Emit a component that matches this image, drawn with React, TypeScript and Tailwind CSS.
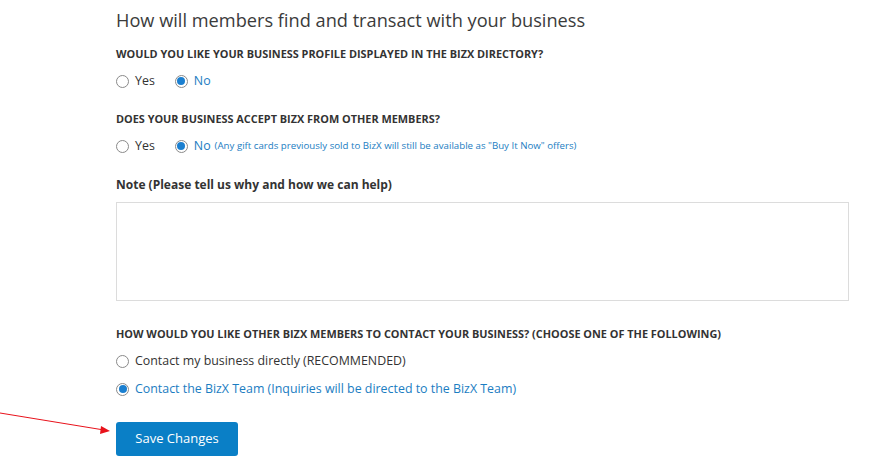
import React, { useState } from 'react';

const font = { fontFamily: '"Open Sans", "Liberation Sans", Arial, sans-serif' };

function Radio({ checked, label, onClick, extra }: { checked: boolean; label: string; onClick: () => void; extra?: string }) {
  return (
    <label className="flex items-center h-[16px] cursor-pointer" onClick={onClick}>
      <span className="w-[13px] h-[13px] rounded-full border border-[#8a8a8a] flex items-center justify-center bg-white">
        {checked && <span className="w-[8px] h-[8px] rounded-full bg-[#1a7fd0]" />}
      </span>
      <span className={`ml-[6px] text-[12.4px] leading-[16px] ${checked ? 'text-[#1b7dc2]' : 'text-[#333]'}`}>{label}</span>
      {extra && <span className="ml-[4px] text-[9.7px] leading-[16px] text-[#1b7dc2]">{extra}</span>}
    </label>
  );
}

function Heading({ children }: { children: React.ReactNode }) {
  return <p className="text-[10.9px] leading-[14px] font-bold uppercase text-[#333]">{children}</p>;
}

export default function App() {
  const [directory, setDirectory] = useState('no');
  const [accept, setAccept] = useState('no');
  const [contact, setContact] = useState('team');

  return (
    <div className="relative w-[873px] h-[470px] bg-white overflow-hidden" style={font}>
      {/* pointer arrow */}
      <svg className="absolute left-0 top-0" width="120" height="440">
        <line x1="0" y1="413" x2="104" y2="430" stroke="#e8121b" strokeWidth="1" />
        <polygon points="110,431 101,426 100,434" fill="#e8121b" />
      </svg>

      <div className="ml-[116px] w-[733px] pt-[8px]">
        <h2 className="text-[18.2px] text-[#3b3b3b] leading-[24px]">How will members find and transact with your business</h2>

        <div className="mt-[15px]">
          <Heading>Would you like your business profile displayed in the BizX directory?</Heading>
          <div className="flex gap-[20px] mt-[12px]">
            <Radio checked={directory === 'yes'} label="Yes" onClick={() => setDirectory('yes')} />
            <Radio checked={directory === 'no'} label="No" onClick={() => setDirectory('no')} />
          </div>
        </div>

        <div className="mt-[23px]">
          <Heading>Does your business accept BizX from other members?</Heading>
          <div className="flex gap-[20px] mt-[12px]">
            <Radio checked={accept === 'yes'} label="Yes" onClick={() => setAccept('yes')} />
            <Radio
              checked={accept === 'no'}
              label="No"
              onClick={() => setAccept('no')}
              extra={'(Any gift cards previously sold to BizX will still be available as "Buy It Now" offers)'}
            />
          </div>
        </div>

        <div className="mt-[23px]">
          <p className="text-[12px] leading-[16px] font-bold text-[#333]">Note (Please tell us why and how we can help)</p>
          <textarea className="mt-[9px] block w-full h-[99px] border border-[#dcdcdc] resize-none outline-none" />
        </div>

        <div className="mt-[26px]">
          <Heading>How would you like other BizX members to contact your business? (Choose one of the following)</Heading>
          <div className="flex flex-col gap-[12px] mt-[12px]">
            <Radio
              checked={contact === 'direct'}
              label="Contact my business directly (RECOMMENDED)"
              onClick={() => setContact('direct')}
            />
            <Radio
              checked={contact === 'team'}
              label="Contact the BizX Team (Inquiries will be directed to the BizX Team)"
              onClick={() => setContact('team')}
            />
          </div>
        </div>

        <button className="block mt-[25px] w-[122px] h-[34px] bg-[#0a7fc6] text-white text-[13px] rounded-[3px]">
          Save Changes
        </button>
      </div>
    </div>
  );
}
